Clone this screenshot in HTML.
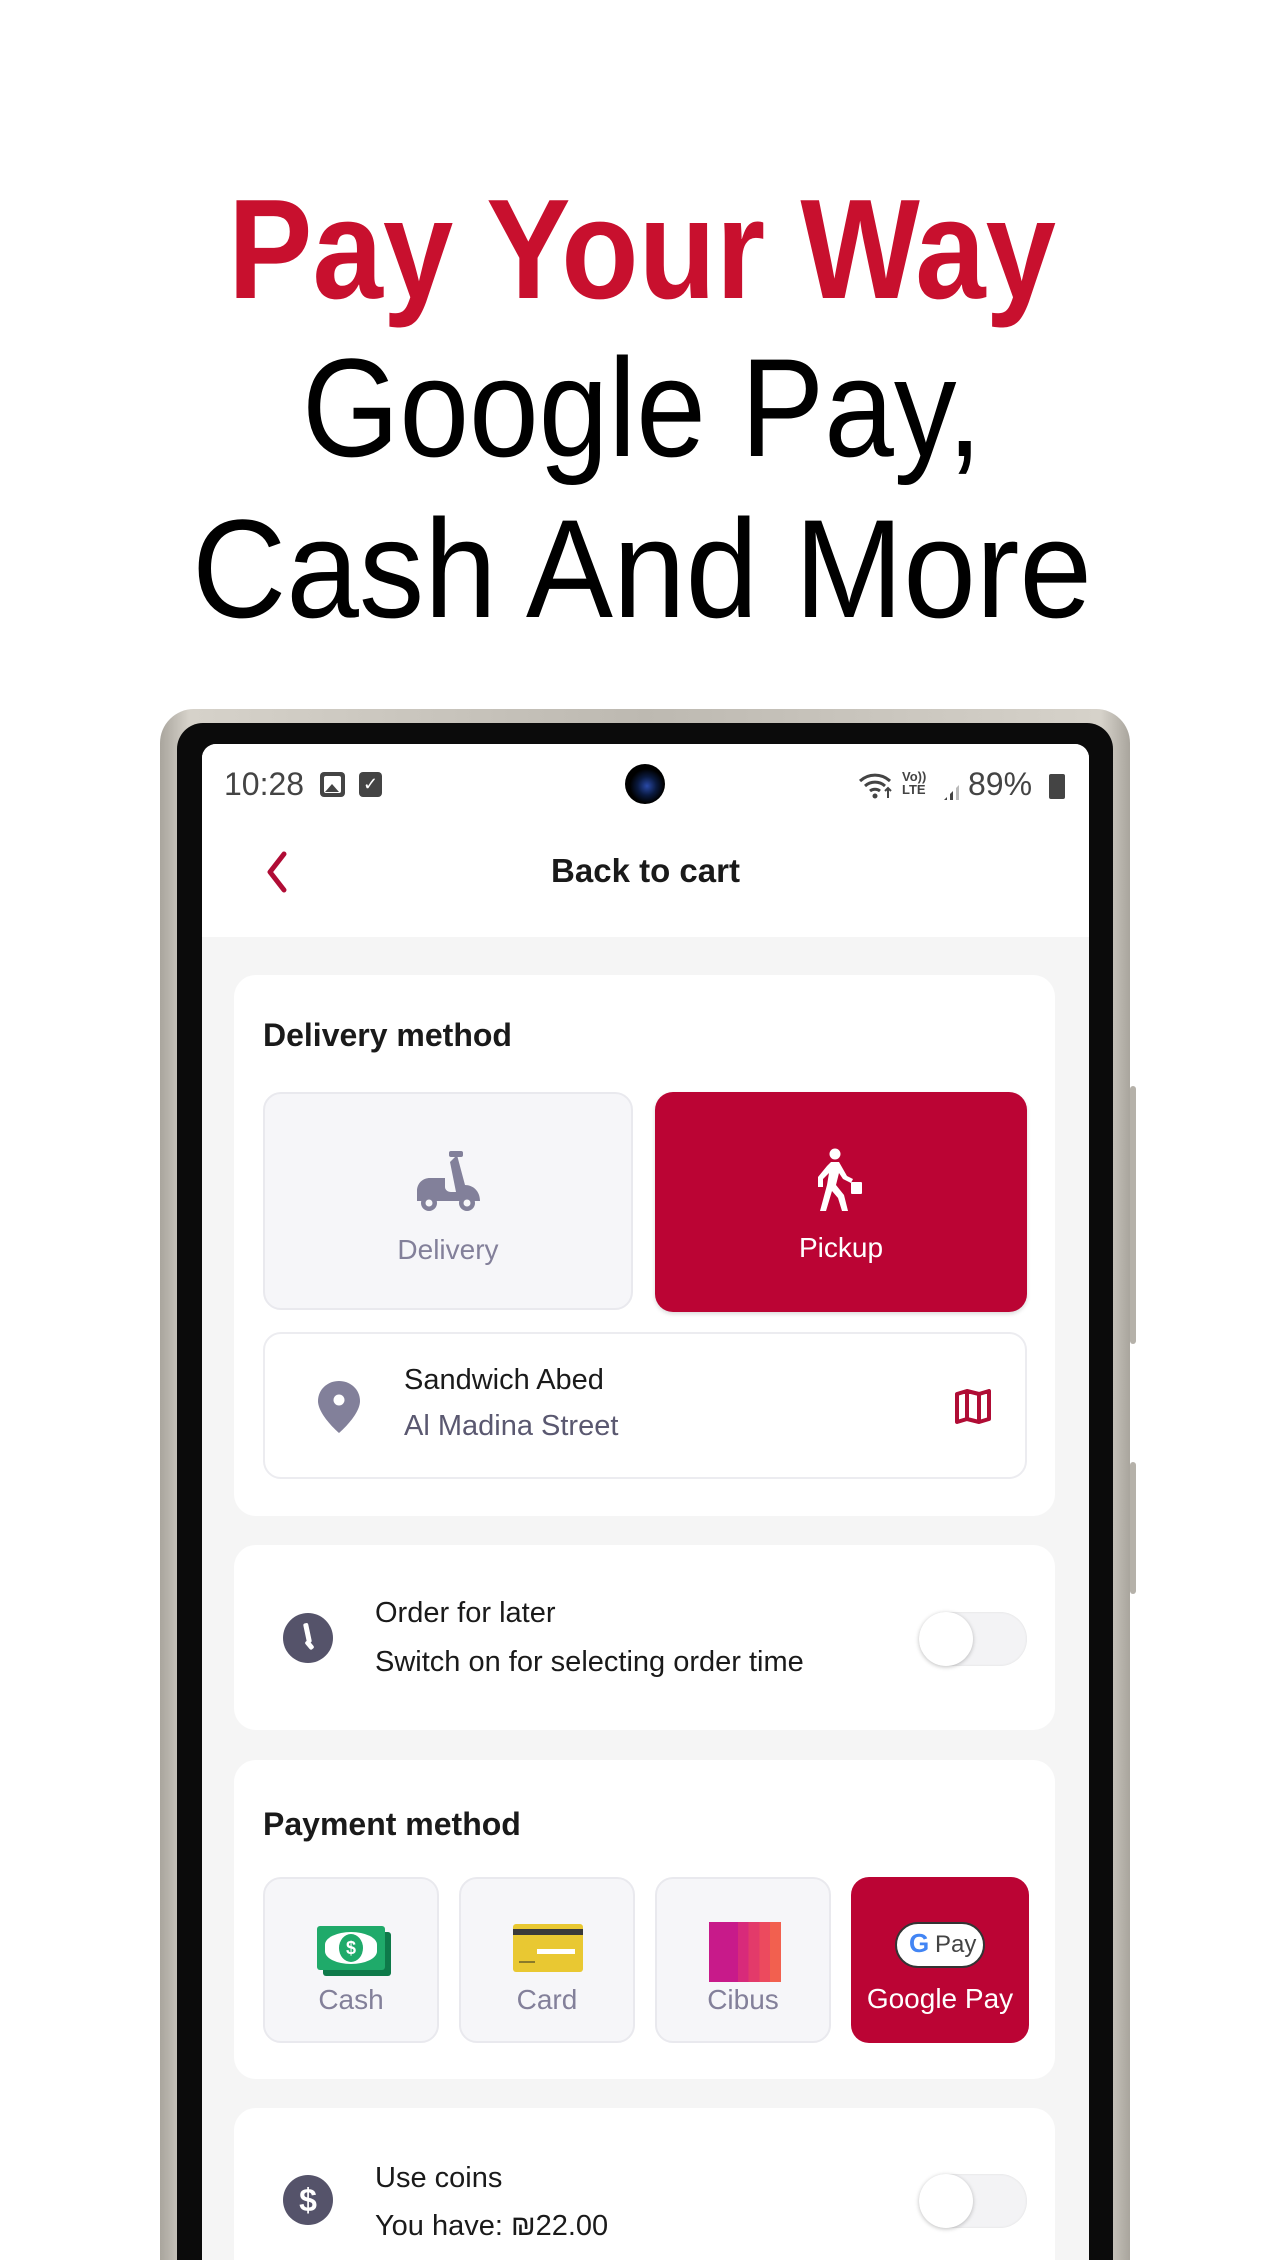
<!DOCTYPE html>
<html style="width:1284px;height:2260px;overflow:hidden"><head><meta charset="utf-8"><style>
*{margin:0;padding:0;box-sizing:border-box}
body{width:1284px;height:2260px;background:#fff;position:relative;overflow:hidden;font-family:"Liberation Sans",sans-serif}
.a{position:absolute}
.t{font-family:"Liberation Sans",sans-serif}
.card{position:absolute;left:234px;width:821px;background:#fff;border-radius:22px}
.btn{position:absolute;border-radius:18px;background:#f6f6f9;border:2px solid #e9e9ee}
.lbl{position:absolute;left:0;right:0;text-align:center;font-size:28px;color:#83809a}
.tog{position:absolute;width:108px;height:54px;border-radius:27px;background:#f3f3f5;box-shadow:inset 0 0 2px #ddd}
.tog:after{content:"";position:absolute;left:0;top:0;width:54px;height:54px;border-radius:27px;background:#fff;box-shadow:0 1px 4px rgba(0,0,0,.25)}
</style></head><body>
<svg class="a" style="left:0;top:0" width="1284" height="700">
<text x="642" y="298" text-anchor="middle" font-family="Liberation Sans" font-weight="bold" font-size="142" fill="#c8102e" textLength="828" lengthAdjust="spacingAndGlyphs">Pay Your Way</text>
<text x="642" y="456" text-anchor="middle" font-family="Liberation Sans" font-size="140" fill="#000" textLength="680" lengthAdjust="spacingAndGlyphs">Google Pay,</text>
<text x="642" y="617" text-anchor="middle" font-family="Liberation Sans" font-size="140" fill="#000" textLength="900" lengthAdjust="spacingAndGlyphs">Cash And More</text>
</svg>
<!-- phone -->
<div class="a" style="left:160px;top:709px;width:970px;height:1551px;border-radius:34px 34px 0 0;background:linear-gradient(90deg,#a9a59d,#d6d2ca 3%,#bdb9b1 50%,#d6d2ca 97%,#a9a59d)"></div>
<div class="a" style="left:1130px;top:1086px;width:6px;height:258px;background:#b5b1a9;border-radius:3px"></div>
<div class="a" style="left:1130px;top:1462px;width:6px;height:132px;background:#b5b1a9;border-radius:3px"></div>
<div class="a" style="left:177px;top:723px;width:936px;height:1537px;border-radius:26px 26px 0 0;background:#0b0b0b"></div>
<div class="a" style="left:202px;top:744px;width:887px;height:1516px;border-radius:14px 14px 0 0;background:#f5f5f5;overflow:hidden">
  <div class="a" style="left:0;top:0;width:887px;height:193px;background:#fff"></div>
  <div class="a t" style="left:22px;top:22px;font-size:32px;color:#444">10:28</div>
  <div class="a" style="left:118px;top:28px;width:25px;height:25px;border-radius:4px;background:#444"><div class="a" style="left:4px;top:4px;width:17px;height:17px;background:#fff;border-radius:2px"></div><div class="a" style="left:5px;top:12px;width:0;height:0;border-left:7px solid transparent;border-right:7px solid transparent;border-bottom:8px solid #444"></div></div>
  <div class="a" style="left:157px;top:28px;width:23px;height:25px;border-radius:4px;background:#444;color:#fff;font-size:18px;text-align:center;line-height:25px">✓</div>
  <div class="a" style="left:423px;top:20px;width:40px;height:40px;border-radius:50%;background:radial-gradient(circle at 55% 55%,#2a4aa8 0,#0a1a40 30%,#000 55%)"></div>
  <svg class="a" style="left:656px;top:28px" width="36" height="28" viewBox="0 0 36 28"><path d="M2 9a22 22 0 0 1 30 0 M7 14a15 15 0 0 1 20 0 M12 19a8 8 0 0 1 10 0" stroke="#444" stroke-width="3" fill="none"/><circle cx="17" cy="24" r="2.5" fill="#444"/><path d="M30 16v10 M27 19l3-3 3 3" stroke="#444" stroke-width="2" fill="none"/></svg>
  <div class="a t" style="left:700px;top:26px;font-size:13px;line-height:13px;color:#444;font-weight:bold">Vo))<br>LTE</div>
  <div class="a" style="left:742px;top:36px;width:20px;height:20px;background:linear-gradient(90deg,#444 0 3px,transparent 3px 6px,#444 6px 9px,transparent 9px 12px,#bbb 12px 15px,transparent 15px);clip-path:polygon(0 100%,100% 0,100% 100%)"></div>
  <div class="a t" style="left:766px;top:22px;font-size:32px;color:#444">89%</div>
  <div class="a" style="left:847px;top:30px;width:16px;height:25px;background:#444;border-radius:2px"></div>
  <svg class="a" style="left:60px;top:106px" width="30" height="44"><path d="M22 4 L8 22 L22 40" stroke="#b00c35" stroke-width="5" fill="none" stroke-linecap="round" stroke-linejoin="round"/></svg>
  <div class="a t" style="left:0;width:887px;top:108px;text-align:center;font-size:33px;font-weight:bold;color:#1a1a1a">Back to cart</div>
</div>
<!-- card1 -->
<div class="card" style="top:975px;height:541px">
  <div class="a t" style="left:29px;top:42px;font-size:32px;font-weight:bold;color:#1a1a1a">Delivery method</div>
  <div class="btn" style="left:29px;top:117px;width:370px;height:218px">
    <svg class="a" style="left:150px;top:55px" width="70" height="66" viewBox="0 0 70 66"><rect x="34" y="2" width="14" height="6" rx="2" fill="#82809a"/><path d="M42 6l8 30c8 0 15 6 15 16H2V42c0-8 6-13 13-13h15v9c0 3 3 5 6 5h5l-6-30z" fill="#82809a"/><circle cx="14" cy="54" r="8" fill="#82809a"/><circle cx="52" cy="54" r="8" fill="#82809a"/><circle cx="14" cy="54" r="3.5" fill="#f6f6f9"/><circle cx="52" cy="54" r="3.5" fill="#f6f6f9"/></svg>
    <div class="lbl" style="top:140px">Delivery</div>
  </div>
  <div class="a" style="left:421px;top:117px;width:372px;height:220px;border-radius:18px;background:#bb0434;box-shadow:0 2px 4px rgba(0,0,0,.15)">
    <svg class="a" style="left:160px;top:56px" width="56" height="66" viewBox="0 0 56 66"><circle cx="20" cy="6" r="5.5" fill="#fff"/><path d="M16 14h8l8 14 6 3-2 4-8-4-4-6-3 12 8 10 4 16h-6l-4-13-6-7-6 20H5l7-26 2-12-6 6v8H3V29l9-11z" fill="#fff"/><rect x="36" y="34" width="11" height="12" rx="1" fill="#fff"/></svg>
    <div class="lbl" style="top:140px;color:#fff">Pickup</div>
  </div>
  <div class="a" style="left:29px;top:357px;width:764px;height:147px;border-radius:18px;border:2px solid #ececf0;background:#fff">
    <svg class="a" style="left:52px;top:46px" width="44" height="54" viewBox="0 0 44 54"><path d="M22 1C10 1 1 10 1 21c0 14 21 32 21 32s21-18 21-32C43 10 34 1 22 1z" fill="#82809a"/><circle cx="22" cy="20" r="5.5" fill="#fff"/></svg>
    <div class="a t" style="left:139px;top:30px;font-size:29px;color:#1a1a1a">Sandwich Abed</div>
    <div class="a t" style="left:139px;top:76px;font-size:29px;color:#5a5870">Al Madina Street</div>
    <svg class="a" style="left:689px;top:55px" width="38" height="36" viewBox="0 0 38 36"><path d="M3 5l10-3 12 3 10-3v28l-10 3-12-3-10 3z M13 2v28 M25 5v28" stroke="#b00c35" stroke-width="4" fill="none" stroke-linejoin="round"/></svg>
  </div>
</div>
<!-- card2 -->
<div class="card" style="top:1545px;height:185px">
  <div class="a" style="left:49px;top:68px;width:50px;height:50px;border-radius:50%;background:#55536a"><div class="a" style="left:22px;top:10px;width:5px;height:20px;background:#fff;border-radius:2px;transform:rotate(-12deg)"></div><div class="a" style="left:24px;top:27px;width:5px;height:10px;background:#fff;border-radius:2px;transform:rotate(-40deg)"></div></div>
  <div class="a t" style="left:141px;top:52px;font-size:29px;color:#1a1a1a">Order for later</div>
  <div class="a t" style="left:141px;top:101px;font-size:29px;color:#1a1a1a">Switch on for selecting order time</div>
  <div class="tog" style="left:685px;top:67px"></div>
</div>
<!-- card3 -->
<div class="card" style="top:1760px;height:319px">
  <div class="a t" style="left:29px;top:46px;font-size:32px;font-weight:bold;color:#1a1a1a">Payment method</div>
  <div class="btn" style="left:29px;top:117px;width:176px;height:166px">
    <div class="a" style="left:58px;top:53px;width:68px;height:44px;background:#0e7a4a;border-radius:3px"></div>
    <div class="a" style="left:52px;top:47px;width:68px;height:44px;background:#1faa6a;border-radius:3px"><div class="a" style="left:8px;top:6px;width:52px;height:32px;border-radius:50%/40%;background:#fff"></div><div class="a" style="left:22px;top:8px;width:24px;height:28px;border-radius:50%;background:#1faa6a;color:#fff;font-size:18px;font-weight:bold;text-align:center;line-height:28px">$</div></div>
    <div class="lbl" style="top:105px">Cash</div>
  </div>
  <div class="btn" style="left:225px;top:117px;width:176px;height:166px">
    <div class="a" style="left:52px;top:45px;width:70px;height:48px;background:#e9c832;border-radius:3px"><div class="a" style="left:0;top:5px;width:70px;height:6px;background:#3a3a3a"></div><div class="a" style="left:24px;top:25px;width:38px;height:5px;background:#fff"></div><div class="a" style="left:6px;top:37px;width:16px;height:2px;background:#8a7a2a"></div></div>
    <div class="lbl" style="top:105px">Card</div>
  </div>
  <div class="btn" style="left:421px;top:117px;width:176px;height:166px">
    <div class="a" style="left:52px;top:43px;width:72px;height:60px;background:linear-gradient(90deg,#c81a8a 0 40%,#d82a7a 40% 55%,#e33a6a 55% 70%,#ec4a5e 70% 85%,#f2604f 85%)"></div>
    <div class="lbl" style="top:105px">Cibus</div>
  </div>
  <div class="a" style="left:617px;top:117px;width:178px;height:166px;border-radius:18px;background:#bb0434">
    <div class="a t" style="left:44px;top:45px;width:90px;height:46px;border-radius:23px;background:#fff;border:2px solid #333;font-size:24px;color:#444;line-height:42px;padding-left:38px">Pay</div>
    <div class="a t" style="left:58px;top:51px;font-size:26px;font-weight:bold;color:#4285f4">G</div>
    <div class="lbl" style="top:106px;color:#fff">Google Pay</div>
  </div>
</div>
<!-- card4 -->
<div class="card" style="top:2108px;height:152px;border-radius:22px 22px 0 0">
  <div class="a t" style="left:49px;top:67px;width:50px;height:50px;border-radius:50%;background:#55536a;color:#fff;font-size:32px;font-weight:bold;text-align:center;line-height:50px">$</div>
  <div class="a t" style="left:141px;top:54px;font-size:29px;color:#1a1a1a">Use coins</div>
  <div class="a t" style="left:141px;top:102px;font-size:29px;color:#1a1a1a">You have: ₪22.00</div>
  <div class="tog" style="left:685px;top:66px"></div>
</div>
</body></html>
